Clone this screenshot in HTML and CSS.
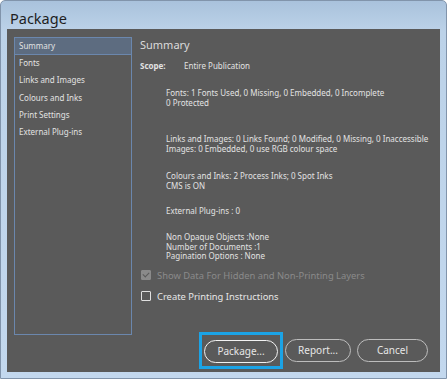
FILE: index.html
```html
<!DOCTYPE html>
<html lang="en">
<head>
  <meta charset="UTF-8">
  <title>Package</title>
  <link rel="stylesheet" href="styles.css">
</head>
<body>

  <div class="window">
    <div class="titlebar">Package</div>

    <div class="frame">
      <div class="panel">

        <div class="top">
          <!-- Section list -->
          <ul class="sections">
            <li class="selected">Summary</li>
            <li>Fonts</li>
            <li>Links and Images</li>
            <li>Colours and Inks</li>
            <li>Print Settings</li>
            <li>External Plug-ins</li>
          </ul>

          <!-- Summary content -->
          <div class="content">
            <h1>Summary</h1>
            <div class="scope"><b>Scope:</b><span>Entire Publication</span></div>

            <div class="info fonts">Fonts: 1 Fonts Used, 0 Missing, 0 Embedded, 0 Incomplete<br>0 Protected</div>
            <div class="info links">Links and Images: 0 Links Found; 0 Modified, 0 Missing, 0 Inaccessible<br>Images: 0 Embedded, 0 use RGB colour space</div>
            <div class="info colours">Colours and Inks: 2 Process Inks; 0 Spot Inks<br>CMS is ON</div>
            <div class="info plugins">External Plug-ins : 0</div>
            <div class="info misc">Non Opaque Objects :None<br>Number of Documents :1<br>Pagination Options : None</div>

            <label class="check disabled"><span class="box checked"></span>Show Data For Hidden and Non-Printing Layers</label>
            <label class="check"><span class="box"></span>Create Printing Instructions</label>
          </div>
        </div>

        <div class="buttons">
          <div class="focus"><button class="btn default">Package...</button></div>
          <button class="btn report">Report...</button>
          <button class="btn">Cancel</button>
        </div>

      </div>
    </div>
  </div>

</body>
</html>
```

FILE: styles.css
```css
body {
  margin: 0;
  font-family: "Noto Sans", "Open Sans", sans-serif;
}

/* Window chrome */
.window {
  width: 445px;
  height: 377px;
  border: 1px solid #8194ab;
  border-radius: 5px 5px 0 0;
  background: linear-gradient(#a9c2dc 0px, #bcd2e8 30px, #c3d8ee 100%);
}

.titlebar {
  height: 28px;
  padding-left: 9px;
  font-size: 14.5px;
  line-height: 34px;
  color: #1e1e1e;
}

.frame {
  padding: 0 6px 6px 6px;
}

.panel {
  height: 343px;
  background: #5a5a5a;
  box-sizing: border-box;
  padding: 8px 0 0 7px;
  color: #e2e2e2;
}

.top {
  display: flex;
  height: 298px;
}

/* Section list */
.sections {
  list-style: none;
  margin: 0;
  padding: 0;
  width: 118px;
  height: 298px;
  box-sizing: border-box;
  border: 1px solid #6b87ad;
  font-size: 8px;
}

.sections li {
  height: 17.3px;
  line-height: 16.6px;
  padding-left: 4px;
}

.sections li.selected {
  background: #5d6c80;
  border-bottom: 1px solid #6b87ad;
  height: 16px;
  line-height: 16px;
}

/* Content */
.content {
  margin-left: 8px;
  flex: 1;
}

.content h1 {
  margin: 0;
  font-size: 11px;
  font-weight: normal;
  color: #dcdcdc;
}

.scope {
  margin-top: 8px;
  font-size: 8px;
}

.scope b {
  display: inline-block;
  width: 44px;
}

.info {
  font-size: 8px;
  line-height: 9.7px;
  margin-left: 26px;
}

.fonts { margin-top: 17px; }
.links { margin-top: 27px; }
.colours { margin-top: 17px; }
.plugins { margin-top: 16px; }
.misc { margin-top: 16px; }

.check {
  display: flex;
  align-items: center;
  font-size: 9.4px;
  margin-left: 1px;
  height: 14px;
  color: #e6e6e6;
}

.check.disabled {
  margin-top: 7px;
  color: #8a8a8a;
}

.check + .check {
  margin-top: 7px;
}

.box {
  width: 8px;
  height: 8px;
  border: 1px solid #e0e0e0;
  border-radius: 1px;
  margin-right: 6px;
  position: relative;
}

.box.checked {
  border-color: #8a8a8a;
  background: #8a8a8a;
}

.box.checked::after {
  content: "";
  position: absolute;
  left: 2px;
  top: 0px;
  width: 3px;
  height: 5px;
  border: solid #5a5a5a;
  border-width: 0 1.5px 1.5px 0;
  transform: rotate(45deg);
}

/* Buttons */
.buttons {
  display: flex;
  align-items: center;
  justify-content: flex-end;
  gap: 6px;
  margin-top: -3px;
  padding-right: 12px;
}

.focus {
  border: 3px solid #1ba3e6;
  padding: 3px 2px;
  margin-right: -4px;
}

.btn {
  height: 23px;
  border: 1px solid #bdbdbd;
  border-radius: 12px;
  background: transparent;
  color: #e6e6e6;
  font-family: "Noto Sans", "Open Sans", sans-serif;
  font-size: 10px;
  padding: 0;
  width: 71px;
}

.btn.report {
  width: 66px;
}

.btn.default {
  border: 1.5px solid #f2f2f2;
  width: 74px;
}
```
